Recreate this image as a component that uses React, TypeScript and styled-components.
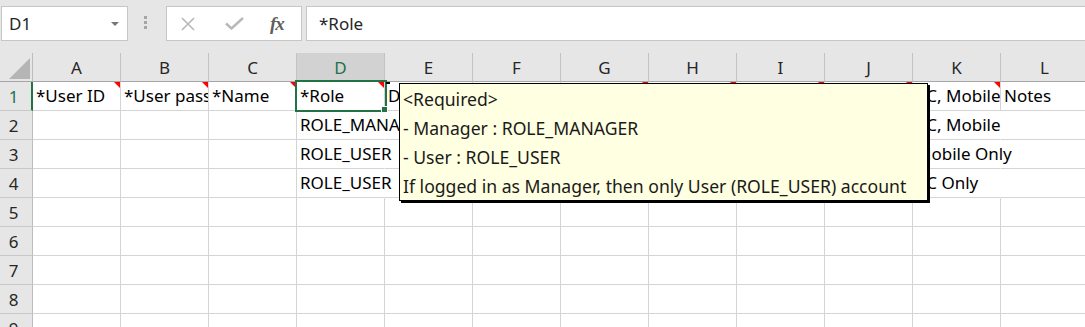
import React from "react";
import styled, { createGlobalStyle, css } from "styled-components";

const FONT = `"Noto Sans", "Noto Sans CJK KR", sans-serif`;
const GREEN = "#217346";

const GlobalStyle = createGlobalStyle`
  html, body { margin: 0; padding: 0; background: #fff; overflow: hidden; }
  body { font-family: ${FONT}; }
`;

const Page = styled.div`
  width: 1085px;
  height: 327px;
  overflow: hidden;
  font-family: ${FONT};
  color: #000;
`;

const FormulaBar = styled.div`
  display: flex;
  align-items: flex-start;
  height: 53px;
  box-sizing: border-box;
  padding: 6px 0 0 1px;
  background: #e6e6e6;
`;

const NameBox = styled.div`
  width: 127px;
  height: 35px;
  box-sizing: border-box;
  border: 1px solid #c6c6c6;
  background: #fff;
  display: flex;
  align-items: center;
  justify-content: space-between;
  padding: 0 8px 0 7px;
  font-size: 17px;
  color: #262626;
  flex-shrink: 0;
`;

const Caret = styled.span`
  width: 0;
  height: 0;
  border-left: 4px solid transparent;
  border-right: 4px solid transparent;
  border-top: 4px solid #777;
`;

const Grip = styled.div`
  display: flex;
  flex-direction: column;
  gap: 2px;
  margin: 10px 19px 0 16px;
  flex-shrink: 0;
`;

const GripDot = styled.span`
  width: 3px;
  height: 3px;
  background: #a6a6a6;
`;

const ButtonBox = styled.div`
  width: 136px;
  height: 35px;
  box-sizing: border-box;
  border: 1px solid #c6c6c6;
  background: #fff;
  display: flex;
  align-items: center;
  padding: 0 0 0 14px;
  flex-shrink: 0;
`;

const IconSlot = styled.span<{ $w: number }>`
  width: ${(p) => p.$w}px;
  display: flex;
  align-items: center;
  justify-content: flex-start;
`;

const Fx = styled.span`
  font-family: "Liberation Serif", "DejaVu Serif", serif;
  font-style: italic;
  font-weight: bold;
  font-size: 19px;
  color: #5f5f5f;
  letter-spacing: -1px;
  line-height: 1;
`;

const FormulaInput = styled.div`
  flex: 1;
  margin-left: 4px;
  height: 35px;
  box-sizing: border-box;
  border: 1px solid #c6c6c6;
  border-right: none;
  background: #fff;
  display: flex;
  align-items: center;
  padding-left: 12px;
  font-size: 17px;
  color: #262626;
`;

const Sheet = styled.div`
  position: relative;
`;

const Row = styled.div`
  display: flex;
  height: 29px;
`;

const Corner = styled.div`
  width: 33px;
  height: 29px;
  box-sizing: border-box;
  border-right: 1px solid #bdbdbd;
  border-bottom: 1px solid #a6a6a6;
  background: #e6e6e6;
  display: flex;
  align-items: flex-end;
  justify-content: flex-end;
  padding: 0 2px 2px 0;
  flex-shrink: 0;
`;

const CornerTriangle = styled.span`
  width: 0;
  height: 0;
  border-left: 21px solid transparent;
  border-bottom: 21px solid #b5b5b5;
`;

const ColHeader = styled.div<{ $active?: boolean }>`
  width: 88px;
  height: 29px;
  box-sizing: border-box;
  border-right: 1px solid #c3c3c3;
  border-bottom: 1px solid #a6a6a6;
  background: ${(p) => (p.$active ? "#d2d2d2" : "#e6e6e6")};
  color: ${(p) => (p.$active ? GREEN : "#262626")};
  font-size: 17px;
  display: flex;
  align-items: center;
  justify-content: center;
  flex-shrink: 0;
`;

const RowHeader = styled.div<{ $active?: boolean }>`
  width: 33px;
  height: 29px;
  box-sizing: border-box;
  border-right: ${(p) => (p.$active ? `2px solid ${GREEN}` : "1px solid #bdbdbd")};
  border-bottom: 1px solid #c8c8c8;
  background: #e6e6e6;
  color: ${(p) => (p.$active ? GREEN : "#262626")};
  font-size: 17px;
  display: flex;
  align-items: center;
  justify-content: center;
  padding-right: ${(p) => (p.$active ? 4 : 5)}px;
  flex-shrink: 0;
`;

const Cell = styled.div<{ $spill?: boolean }>`
  position: relative;
  width: 88px;
  height: 29px;
  box-sizing: border-box;
  border-right: 1px solid ${(p) => (p.$spill ? "transparent" : "#d4d4d4")};
  border-bottom: 1px solid #d4d4d4;
  flex-shrink: 0;
  z-index: ${(p) => (p.$spill ? 1 : "auto")};
`;

const CellText = styled.div<{ $spill?: boolean }>`
  font-size: 17px;
  line-height: 28px;
  padding-left: 3px;
  white-space: nowrap;
  ${(p) =>
    p.$spill
      ? css`
          overflow: visible;
        `
      : css`
          overflow: hidden;
        `}
`;

const CommentMark = styled.span`
  position: absolute;
  top: 0;
  right: 0;
  width: 0;
  height: 0;
  border-left: 6px solid transparent;
  border-top: 6px solid #ff0000;
`;

const Selection = styled.div`
  position: absolute;
  top: -2px;
  left: -2px;
  width: 92px;
  height: 32px;
  box-sizing: border-box;
  border: 2px solid ${GREEN};
  z-index: 3;
  pointer-events: none;
`;

const FillHandle = styled.span`
  position: absolute;
  right: -3px;
  bottom: -3px;
  width: 5px;
  height: 5px;
  background: ${GREEN};
  border: 1px solid #fff;
`;

const Tooltip = styled.div`
  position: absolute;
  left: 399px;
  top: 30px;
  width: 529px;
  height: 118px;
  box-sizing: border-box;
  border: 1px solid #000;
  box-shadow: 2px 2px 0 #000;
  background: #ffffe1;
  padding: 1px 3px;
  z-index: 5;
`;

const TipLine = styled.div`
  font-size: 17.6px;
  line-height: 29px;
  color: #1a1a1a;
  white-space: nowrap;
`;

const Pointer = styled.span`
  position: absolute;
  left: 386px;
  top: 29px;
  width: 4px;
  height: 2px;
  background: #000;
  z-index: 6;
`;

type CellData = { text?: string; comment?: boolean; spill?: boolean };

const cols = ["A", "B", "C", "D", "E", "F", "G", "H", "I", "J", "K", "L"];

const rows: CellData[][] = [
  [
    { text: "*User ID", comment: true },
    { text: "*User password", comment: true },
    { text: "*Name", comment: true },
    { text: "*Role", comment: true },
    { text: "Department" },
    { text: "Email" },
    { text: "Phone", comment: true },
    { text: "Mobile", comment: true },
    { text: "Status", comment: true },
    { text: "Language", comment: true },
    { text: "PC, Mobile", comment: true },
    { text: "Notes" },
  ],
  [
    {}, {}, {},
    { text: "ROLE_MANAGER", spill: true },
    {}, {}, {}, {}, {}, {},
    { text: "PC, Mobile", spill: true },
    {},
  ],
  [
    {}, {}, {},
    { text: "ROLE_USER", spill: true },
    {}, {}, {}, {}, {}, {},
    { text: "Mobile Only", spill: true },
    {},
  ],
  [
    {}, {}, {},
    { text: "ROLE_USER", spill: true },
    {}, {}, {}, {}, {}, {},
    { text: "PC Only", spill: true },
    {},
  ],
  ...Array.from({ length: 5 }, () => cols.map(() => ({} as CellData))),
];

const CloseIcon = () => (
  <svg width="14" height="14" viewBox="0 0 14 14">
    <path d="M1 1 L13 13 M13 1 L1 13" stroke="#b8b8b8" strokeWidth="1.6" fill="none" />
  </svg>
);

const CheckIcon = () => (
  <svg width="19" height="13" viewBox="0 0 19 13">
    <path d="M1 6.5 L6.5 11.5 L18 1" stroke="#b8b8b8" strokeWidth="2.4" fill="none" />
  </svg>
);

export default function App() {
  return (
    <Page>
      <GlobalStyle />
      <FormulaBar>
        <NameBox>
          <span>D1</span>
          <Caret />
        </NameBox>
        <Grip>
          <GripDot />
          <GripDot />
          <GripDot />
        </Grip>
        <ButtonBox>
          <IconSlot $w={44}>
            <CloseIcon />
          </IconSlot>
          <IconSlot $w={45}>
            <CheckIcon />
          </IconSlot>
          <IconSlot $w={30}>
            <Fx>fx</Fx>
          </IconSlot>
        </ButtonBox>
        <FormulaInput>*Role</FormulaInput>
      </FormulaBar>
      <Sheet>
        <Row>
          <Corner>
            <CornerTriangle />
          </Corner>
          {cols.map((c) => (
            <ColHeader key={c} $active={c === "D"}>
              {c}
            </ColHeader>
          ))}
        </Row>
        {rows.map((r, ri) => (
          <Row key={ri}>
            <RowHeader $active={ri === 0}>{ri + 1}</RowHeader>
            {r.map((cell, ci) => (
              <Cell key={ci} $spill={cell.spill}>
                {cell.text && <CellText $spill={cell.spill}>{cell.text}</CellText>}
                {cell.comment && <CommentMark />}
                {ri === 0 && ci === 3 && (
                  <Selection>
                    <FillHandle />
                  </Selection>
                )}
              </Cell>
            ))}
          </Row>
        ))}
        <Pointer />
        <Tooltip>
          <TipLine>&lt;Required&gt;</TipLine>
          <TipLine>- Manager : ROLE_MANAGER</TipLine>
          <TipLine>- User : ROLE_USER</TipLine>
          <TipLine>If logged in as Manager, then only User (ROLE_USER) account</TipLine>
        </Tooltip>
      </Sheet>
    </Page>
  );
}
